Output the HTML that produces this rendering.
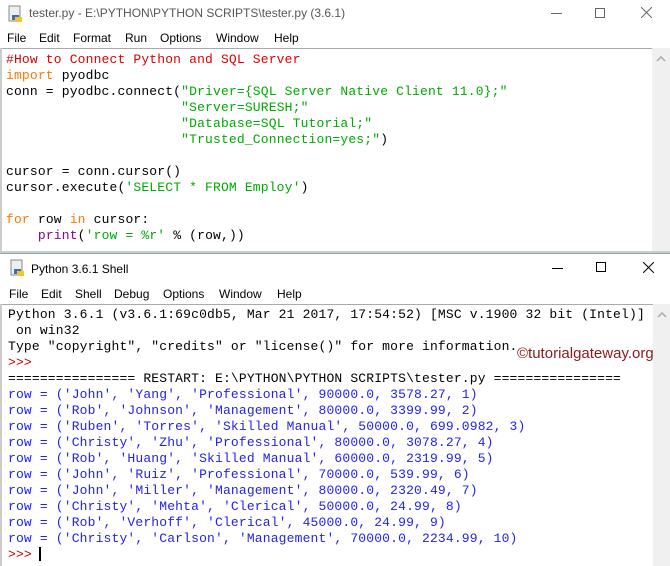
<!DOCTYPE html>
<html><head><meta charset="utf-8"><style>
*{margin:0;padding:0;box-sizing:border-box}
body{width:670px;height:566px;overflow:hidden;background:#fff;position:relative;font-family:"Liberation Sans",sans-serif}
.abs{position:absolute}
.title{font-size:12px;color:#555}
.menu span{position:absolute;font-size:12px;color:#000;white-space:pre}
.code{font-family:"Liberation Mono",monospace;font-size:13px;letter-spacing:0.16px;line-height:16px;white-space:pre;color:#000}
.r{color:#dd0000}.o{color:#ff7700}.g{color:#00aa00}.p{color:#900090}.b{color:#2222ee}.d{color:#c00000}
.sb{background:#f0f0f0}
</style></head><body>
<div class="abs" style="left:0;top:0;width:670px;height:48px;background:#fff"></div>
<svg class="abs" style="left:7px;top:5px" width="18" height="18" viewBox="0 0 18 18"><rect x="2" y="1" width="11" height="15" fill="#eee" stroke="#888"/><path d="M5 10h7v5H5z" fill="#3a6fb0"/><path d="M8 12h7v5H8z" fill="#f2c530"/></svg>
<div class="abs title" style="left:29px;top:6px">tester.py - E:\PYTHON\PYTHON SCRIPTS\tester.py (3.6.1)</div>
<div class="abs" style="left:551px;top:13px;width:11px;height:1px;background:#666"></div>
<div class="abs" style="left:595px;top:8px;width:10px;height:10px;border:1px solid #666"></div>
<svg class="abs" style="left:641px;top:7px" width="11" height="11"><path d="M0 0L11 11M11 0L0 11" stroke="#666" stroke-width="1"/></svg>
<div class="abs menu" style="left:0;top:31px"><span style="left:7px">File</span><span style="left:39px">Edit</span><span style="left:73px">Format</span><span style="left:125px">Run</span><span style="left:160px">Options</span><span style="left:216px">Window</span><span style="left:274px">Help</span></div>
<div class="abs" style="left:0;top:48px;width:652px;height:1px;background:#aaa"></div>
<div class="abs" style="left:0;top:48px;width:2px;height:204px;background:#ccc"></div>
<div class="abs sb" style="left:652px;top:48px;width:18px;height:205px"></div>
<svg class="abs" style="left:656px;top:56px" width="10" height="6"><path d="M1 5L5 1L9 5" stroke="#aaa" fill="none" stroke-width="1.5"/></svg>
<div class="abs code" style="left:6px;top:52px"><span class="r">#How to Connect Python and SQL Server</span>
<span class="o">import</span> pyodbc
conn = pyodbc.connect(<span class="g">"Driver={SQL Server Native Client 11.0};"</span>
                      <span class="g">"Server=SURESH;"</span>
                      <span class="g">"Database=SQL Tutorial;"</span>
                      <span class="g">"Trusted_Connection=yes;"</span>)

cursor = conn.cursor()
cursor.execute(<span class="g">'SELECT * FROM Employ'</span>)

<span class="o">for</span> row <span class="o">in</span> cursor:
    <span class="p">print</span>(<span class="g">'row = %r'</span> % (row,))</div>
<div class="abs" style="left:0;top:251px;width:670px;height:2px;background:#ccc"></div>
<div class="abs" style="left:0;top:253px;width:670px;height:1px;background:#8aa"></div>
<svg class="abs" style="left:9px;top:259px" width="18" height="18" viewBox="0 0 18 18"><rect x="2" y="1" width="11" height="15" fill="#eee" stroke="#888"/><path d="M5 10h7v5H5z" fill="#3a6fb0"/><path d="M8 12h7v5H8z" fill="#f2c530"/></svg>
<div class="abs" style="left:31px;top:262px;font-size:12px;color:#000">Python 3.6.1 Shell</div>
<div class="abs" style="left:552px;top:268px;width:11px;height:1px;background:#000"></div>
<div class="abs" style="left:596px;top:262px;width:10px;height:10px;border:1px solid #000"></div>
<svg class="abs" style="left:643px;top:262px" width="11" height="11"><path d="M0 0L11 11M11 0L0 11" stroke="#000" stroke-width="1"/></svg>
<div class="abs menu" style="left:0;top:287px"><span style="left:9px">File</span><span style="left:41px">Edit</span><span style="left:75px">Shell</span><span style="left:114px">Debug</span><span style="left:163px">Options</span><span style="left:219px">Window</span><span style="left:277px">Help</span></div>
<div class="abs" style="left:0;top:304px;width:653px;height:1px;background:#aaa"></div>
<div class="abs" style="left:0;top:304px;width:2px;height:262px;background:#ccc"></div>
<div class="abs sb" style="left:653px;top:304px;width:17px;height:262px"></div>
<svg class="abs" style="left:657px;top:312px" width="10" height="6"><path d="M1 5L5 1L9 5" stroke="#aaa" fill="none" stroke-width="1.5"/></svg>
<div class="abs code" style="left:8px;top:307px">Python 3.6.1 (v3.6.1:69c0db5, Mar 21 2017, 17:54:52) [MSC v.1900 32 bit (Intel)]
 on win32
Type "copyright", "credits" or "license()" for more information.
<span class="d">&gt;&gt;&gt;</span>
================ RESTART: E:\PYTHON\PYTHON SCRIPTS\tester.py ================
<span class="b">row = ('John', 'Yang', 'Professional', 90000.0, 3578.27, 1)
row = ('Rob', 'Johnson', 'Management', 80000.0, 3399.99, 2)
row = ('Ruben', 'Torres', 'Skilled Manual', 50000.0, 699.0982, 3)
row = ('Christy', 'Zhu', 'Professional', 80000.0, 3078.27, 4)
row = ('Rob', 'Huang', 'Skilled Manual', 60000.0, 2319.99, 5)
row = ('John', 'Ruiz', 'Professional', 70000.0, 539.99, 6)
row = ('John', 'Miller', 'Management', 80000.0, 2320.49, 7)
row = ('Christy', 'Mehta', 'Clerical', 50000.0, 24.99, 8)
row = ('Rob', 'Verhoff', 'Clerical', 45000.0, 24.99, 9)
row = ('Christy', 'Carlson', 'Management', 70000.0, 2234.99, 10)</span>
<span class="d">&gt;&gt;&gt;</span> </div>
<div class="abs" style="left:39px;top:547px;width:2px;height:14px;background:#000"></div>
<div class="abs" style="left:517px;top:345px;font-size:15px;color:#8b1a1a">©tutorialgateway.org</div>
</body></html>
